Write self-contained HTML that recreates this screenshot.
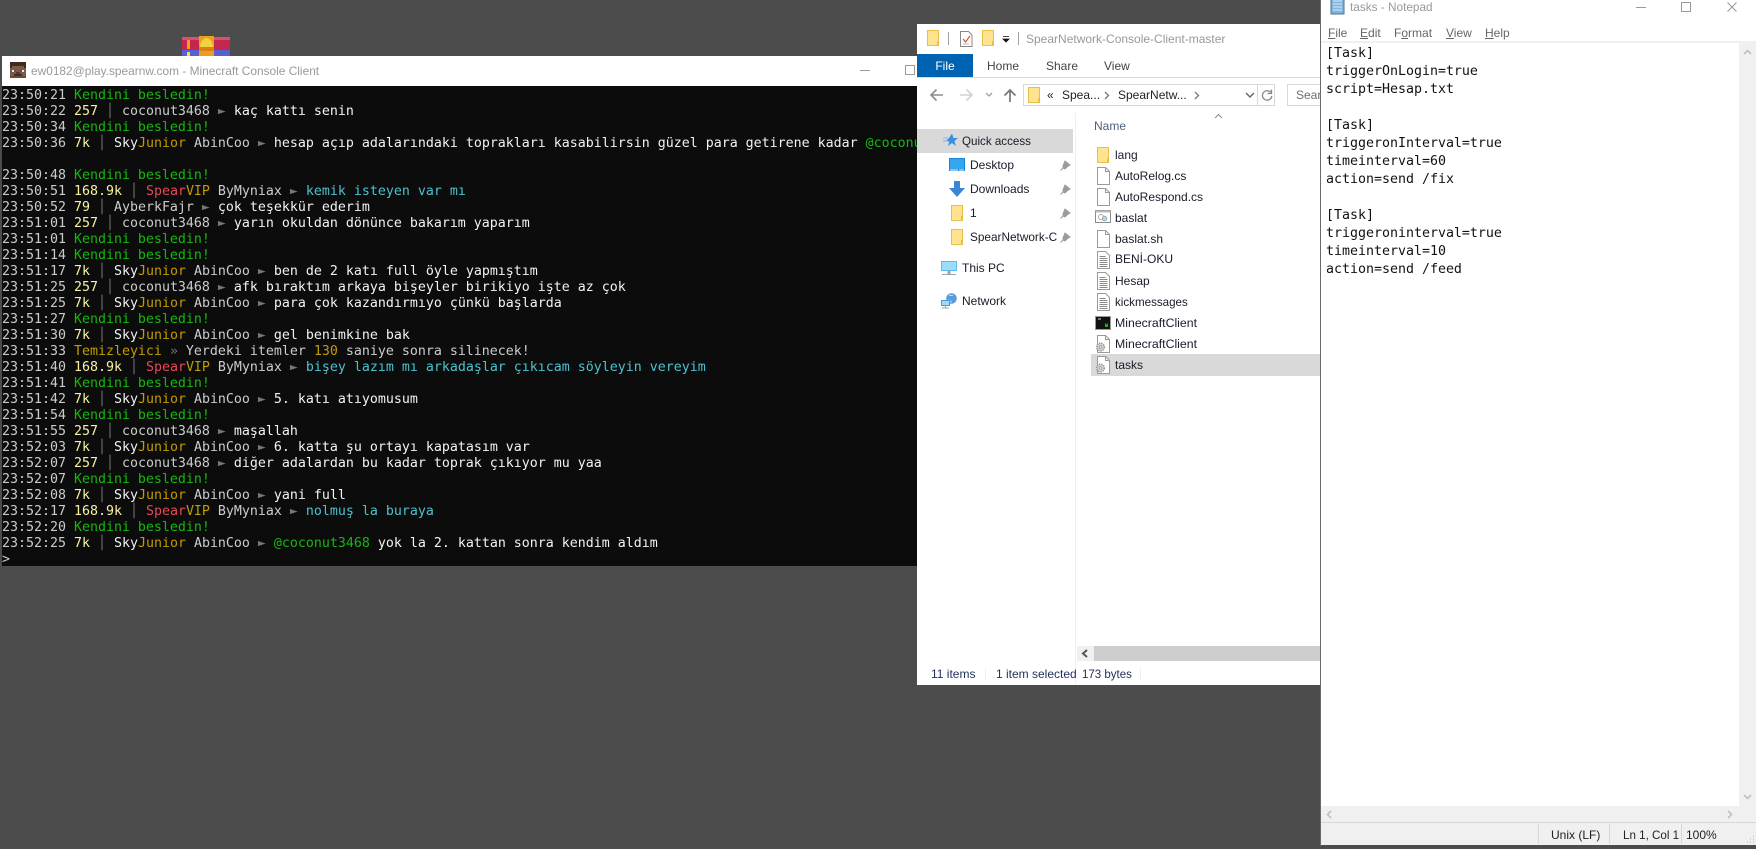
<!DOCTYPE html>
<html><head><meta charset="utf-8"><title>Desktop</title>
<style>
html,body{margin:0;padding:0;width:1756px;height:849px;overflow:hidden;background:#4c4c4c}
body{position:relative;font-family:"Liberation Sans",sans-serif;font-size:12px;color:#1a1a1a}
.a{position:absolute;white-space:nowrap}
svg{position:absolute;display:block;overflow:visible}
#con{left:2px;top:86px;width:915px;height:480px;background:#0c0c0c;overflow:hidden}
#con pre{position:absolute;left:0;top:2px;margin:0;font-family:"DejaVu Sans Mono","Liberation Mono",monospace;font-size:13.29px;line-height:16px;color:#ccc}
.g{color:#16b80f}.y{color:#f9f1a5}.b{color:#767676}.w{color:#f2f2f2}.o{color:#c19c00}.r{color:#e74856}.c{color:#4cc2cf}
.m{font-family:"DejaVu Sans Mono","Liberation Mono",monospace;font-size:13.29px;line-height:18px;color:#111;white-space:pre}
.f{left:1115px;height:16px;line-height:16px;color:#1a1a2a}
.ni{height:16px;line-height:16px;color:#1a1a2a}
.mn{top:26px;color:#666;line-height:14px}
.mn u{text-underline-offset:1px}
</style></head><body>

<!-- WinRAR desktop icon -->
<svg style="left:182px;top:35px" width="48" height="22" viewBox="0 0 48 22">
<rect x="0" y="2" width="48" height="14" rx="2" fill="#c3264f"/><rect x="0" y="2" width="48" height="3" fill="#d9506f"/>
<rect x="0" y="15" width="48" height="7" fill="#5a5fd0"/>
<rect x="5" y="5" width="3" height="9" fill="#f0a020"/><rect x="5" y="17" width="3" height="5" fill="#f4e040"/>
<rect x="17" y="1" width="15" height="21" fill="#e8a020"/><path d="M18 13c0-6 3-10 6.500-10s6.500 4 6.500 10z" fill="#f2d040"/><rect x="17" y="12" width="15" height="4" fill="#d98010"/>
</svg>

<!-- Console window -->
<div class="a" style="left:2px;top:56px;width:915px;height:30px;background:#fff"></div>
<svg style="left:10px;top:62px" width="16" height="16" viewBox="0 0 8 8" shape-rendering="crispEdges">
<rect width="8" height="8" fill="#7d5a45"/><rect width="8" height="2" fill="#3f2a1c"/><rect y="2" width="1" height="1" fill="#3f2a1c"/><rect x="7" y="2" width="1" height="1" fill="#3f2a1c"/>
<rect x="1" y="4" width="1" height="1" fill="#e8e8f0"/><rect x="2" y="4" width="1" height="1" fill="#54508c"/><rect x="5" y="4" width="1" height="1" fill="#54508c"/><rect x="6" y="4" width="1" height="1" fill="#e8e8f0"/>
<rect x="3" y="5" width="2" height="1" fill="#5c3a28"/><rect x="2" y="6" width="4" height="1" fill="#4a2f20"/><rect y="7" width="8" height="1" fill="#6a4a38"/>
</svg>
<div class="a" style="left:31px;top:63px;line-height:16px;font-size:11.9px;color:#999">ew0182@play.spearnw.com - Minecraft Console Client</div>
<div class="a" style="left:860px;top:70px;width:10px;height:1px;background:#999"></div>
<div class="a" style="left:905px;top:65px;width:8px;height:8px;border:1px solid #999"></div>
<div class="a" id="con"><pre>23:50:21 <span class="g">Kendini besledin!</span>
23:50:22 <span class="y">257</span> <span class="b">│</span> coconut3468 <span class="b">►</span> <span class="w">kaç kattı senin</span>
23:50:34 <span class="g">Kendini besledin!</span>
23:50:36 <span class="y">7k</span> <span class="b">│</span> <span class="w">Sky</span><span class="o">Junior</span> AbinCoo <span class="b">►</span> <span class="w">hesap açıp adalarındaki toprakları kasabilirsin güzel para getirene kadar </span><span class="g">@coconut3468</span>

23:50:48 <span class="g">Kendini besledin!</span>
23:50:51 <span class="y">168.9k</span> <span class="b">│</span> <span class="r">Spear</span><span class="o">VIP</span> ByMyniax <span class="b">►</span> <span class="c">kemik isteyen var mı</span>
23:50:52 <span class="y">79</span> <span class="b">│</span> AyberkFajr <span class="b">►</span> <span class="w">çok teşekkür ederim</span>
23:51:01 <span class="y">257</span> <span class="b">│</span> coconut3468 <span class="b">►</span> <span class="w">yarın okuldan dönünce bakarım yaparım</span>
23:51:01 <span class="g">Kendini besledin!</span>
23:51:14 <span class="g">Kendini besledin!</span>
23:51:17 <span class="y">7k</span> <span class="b">│</span> <span class="w">Sky</span><span class="o">Junior</span> AbinCoo <span class="b">►</span> <span class="w">ben de 2 katı full öyle yapmıştım</span>
23:51:25 <span class="y">257</span> <span class="b">│</span> coconut3468 <span class="b">►</span> <span class="w">afk bıraktım arkaya bişeyler birikiyo işte az çok</span>
23:51:25 <span class="y">7k</span> <span class="b">│</span> <span class="w">Sky</span><span class="o">Junior</span> AbinCoo <span class="b">►</span> <span class="w">para çok kazandırmıyo çünkü başlarda</span>
23:51:27 <span class="g">Kendini besledin!</span>
23:51:30 <span class="y">7k</span> <span class="b">│</span> <span class="w">Sky</span><span class="o">Junior</span> AbinCoo <span class="b">►</span> <span class="w">gel benimkine bak</span>
23:51:33 <span class="o">Temizleyici</span> <span class="b">»</span> Yerdeki itemler <span class="o">130</span> saniye sonra silinecek!
23:51:40 <span class="y">168.9k</span> <span class="b">│</span> <span class="r">Spear</span><span class="o">VIP</span> ByMyniax <span class="b">►</span> <span class="c">bişey lazım mı arkadaşlar çıkıcam söyleyin vereyim</span>
23:51:41 <span class="g">Kendini besledin!</span>
23:51:42 <span class="y">7k</span> <span class="b">│</span> <span class="w">Sky</span><span class="o">Junior</span> AbinCoo <span class="b">►</span> <span class="w">5. katı atıyomusum</span>
23:51:54 <span class="g">Kendini besledin!</span>
23:51:55 <span class="y">257</span> <span class="b">│</span> coconut3468 <span class="b">►</span> <span class="w">maşallah</span>
23:52:03 <span class="y">7k</span> <span class="b">│</span> <span class="w">Sky</span><span class="o">Junior</span> AbinCoo <span class="b">►</span> <span class="w">6. katta şu ortayı kapatasım var</span>
23:52:07 <span class="y">257</span> <span class="b">│</span> coconut3468 <span class="b">►</span> <span class="w">diğer adalardan bu kadar toprak çıkıyor mu yaa</span>
23:52:07 <span class="g">Kendini besledin!</span>
23:52:08 <span class="y">7k</span> <span class="b">│</span> <span class="w">Sky</span><span class="o">Junior</span> AbinCoo <span class="b">►</span> <span class="w">yani full</span>
23:52:17 <span class="y">168.9k</span> <span class="b">│</span> <span class="r">Spear</span><span class="o">VIP</span> ByMyniax <span class="b">►</span> <span class="c">nolmuş la buraya</span>
23:52:20 <span class="g">Kendini besledin!</span>
23:52:25 <span class="y">7k</span> <span class="b">│</span> <span class="w">Sky</span><span class="o">Junior</span> AbinCoo <span class="b">►</span> <span class="g">@coconut3468</span> <span class="w">yok la 2. kattan sonra kendim aldım</span>
&gt;</pre></div>

<!-- Explorer window -->
<div class="a" style="left:917px;top:24px;width:404px;height:661px;background:#fff;overflow:hidden">
  <div class="a" style="left:0;top:30px;width:56px;height:23px;background:#0063b1"></div>
  <div class="a" style="left:0;top:53px;width:404px;height:1px;background:#dadada"></div>
</div>
<svg width="0" height="0" style="position:absolute"><defs>
<g id="fo"><path d="M.5.500h11v15H.5z" fill="#ffe38e" stroke="#e8bf4a"/><path d="M10 11h2v4.500h-2z" fill="#e8bf4a"/></g>
<g id="doc"><path d="M.5.500h8l4 4v13H.5z" fill="#fff" stroke="#9a9a9a"/><path d="M8.500.500v4h4" fill="none" stroke="#9a9a9a"/></g>
<g id="txt"><path d="M.5.500h8l4 4v13H.5z" fill="#fff" stroke="#9a9a9a"/><path d="M2.500 5.500h6M2.500 7.500h8M2.500 9.500h8M2.500 11.500h8M2.500 13.500h8M2.500 15.500h8" stroke="#888" fill="none"/></g>
<g id="cfg"><path d="M2.500.500h8l4 4v13h-12z" fill="#fff" stroke="#9a9a9a"/><path d="M10.500.500v4h4" fill="none" stroke="#9a9a9a"/><circle cx="5.500" cy="12" r="3.800" fill="#ddd" stroke="#999" stroke-width="1.600" stroke-dasharray="1.500 .8"/><circle cx="5.500" cy="12" r="1.400" fill="#fff" stroke="#999"/></g>
<g id="pin"><path d="M5 1l5 4-2 1-3 3-2-1 0-2zM3.500 7.500L.5 10.500" fill="#9b9b9b" stroke="#9b9b9b"/></g>
</defs></svg>
<svg style="left:927px;top:30px" width="13" height="16"><use href="#fo"/></svg>
<div class="a" style="left:948px;top:32px;width:1px;height:13px;background:#a0a0a0"></div>
<svg style="left:960px;top:31px" width="13" height="16"><path d="M.5.500h8l3.500 3.500v11.500H.5z" fill="#fff" stroke="#888"/><path d="M3 8l2.500 3L10 5" fill="none" stroke="#e0552a" stroke-width="1.300"/><path d="M3 13h6" stroke="#bbb"/></svg>
<svg style="left:982px;top:30px" width="13" height="16"><use href="#fo"/></svg>
<svg style="left:1002px;top:36px" width="9" height="8"><path d="M1 .500h6M1 3h6l-3 3z" fill="#111" stroke="#111" stroke-width=".8"/></svg>
<div class="a" style="left:1018px;top:32px;width:1px;height:13px;background:#a0a0a0"></div>
<div class="a" style="left:1026px;top:31px;line-height:16px;font-size:12px;color:#999">SpearNetwork-Console-Client-master</div>
<div class="a" style="left:917px;top:58px;width:56px;text-align:center;line-height:16px;color:#fff">File</div>
<div class="a" style="left:987px;top:58px;line-height:16px;color:#444">Home</div>
<div class="a" style="left:1046px;top:58px;line-height:16px;color:#444">Share</div>
<div class="a" style="left:1104px;top:58px;line-height:16px;color:#444">View</div>

<svg style="left:929px;top:88px" width="15" height="14"><path d="M14 7H2M7.500 1.500L2 7l5.500 5.500" fill="none" stroke="#8e8e8e" stroke-width="1.600"/></svg>
<svg style="left:959px;top:88px" width="15" height="14"><path d="M1 7h12M7.500 1.500L13 7l-5.500 5.500" fill="none" stroke="#d2d2d2" stroke-width="1.600"/></svg>
<svg style="left:985px;top:92px" width="9" height="6"><path d="M1 1l3 3 3-3" fill="none" stroke="#a0a0a0" stroke-width="1.300"/></svg>
<svg style="left:1003px;top:88px" width="14" height="15"><path d="M7 14V2M1.500 7.500L7 2l5.500 5.500" fill="none" stroke="#777" stroke-width="1.700"/></svg>
<div class="a" style="left:1023px;top:84px;width:250px;height:20px;border:1px solid #d9d9d9"></div>
<svg style="left:1028px;top:87px" width="13" height="16"><use href="#fo"/></svg>
<div class="a" style="left:1047px;top:87px;line-height:16px;color:#222">«</div>
<div class="a" style="left:1062px;top:87px;line-height:16px;color:#222">Spea...</div>
<svg style="left:1104px;top:91px" width="6" height="9"><path d="M1 1l3.500 3.500L1 8" fill="none" stroke="#777" stroke-width="1.300"/></svg>
<div class="a" style="left:1118px;top:87px;line-height:16px;color:#222">SpearNetw...</div>
<svg style="left:1194px;top:91px" width="6" height="9"><path d="M1 1l3.500 3.500L1 8" fill="none" stroke="#777" stroke-width="1.300"/></svg>
<svg style="left:1245px;top:92px" width="10" height="7"><path d="M1 1l4 4 4-4" fill="none" stroke="#666" stroke-width="1.400"/></svg>
<div class="a" style="left:1257px;top:85px;width:1px;height:20px;background:#d9d9d9"></div>
<svg style="left:1261px;top:89px" width="12" height="13"><path d="M9.800 3.500A4.700 4.700 0 1 0 10.800 7" fill="none" stroke="#888" stroke-width="1.300"/><path d="M10.500 .500v4h-4" fill="none" stroke="#888" stroke-width="1.300"/></svg>
<div class="a" style="left:1287px;top:84px;width:40px;height:20px;border:1px solid #d9d9d9;border-right:0"></div>
<div class="a" style="left:1296px;top:87px;line-height:16px;color:#6d6d6d;width:25px;overflow:hidden">Search</div>

<div class="a" style="left:1075px;top:113px;width:1px;height:572px;background:#f0f0f0"></div>
<div class="a" style="left:917px;top:129px;width:156px;height:24px;background:#d9d9d9"></div>
<svg style="left:943px;top:133px" width="15" height="15" viewBox="0 0 15 15"><path d="M9 .500l1.500 4.500H15l-3.500 3 1.300 5-3.800-3-4 3 1.300-4.500-3.300-.5L6 5z" fill="#3b8fe0"/><path d="M0 5h5M0 8h3" stroke="#7cb8ee"/></svg>
<div class="a ni" style="left:962px;top:134px;font-size:11.6px">Quick access</div>
<svg style="left:949px;top:158px" width="16" height="14"><rect width="16" height="13" fill="#1586dd"/><rect x="1" y="1" width="14" height="10" fill="#35a6ee"/><path d="M1 12h14" stroke="#fff" stroke-dasharray="8 1"/></svg>
<div class="a ni" style="left:970px;top:157px">Desktop</div>
<svg style="left:949px;top:181px" width="16" height="16"><path d="M5 0h6v7h5l-8 9-8-9h5z" fill="#3a86d6"/></svg>
<div class="a ni" style="left:970px;top:181px">Downloads</div>
<svg style="left:951px;top:205px" width="13" height="16"><use href="#fo"/></svg>
<div class="a ni" style="left:970px;top:205px">1</div>
<svg style="left:951px;top:229px" width="13" height="16"><use href="#fo"/></svg>
<div class="a ni" style="left:970px;top:229px;font-size:11.8px">SpearNetwork-C</div>
<svg style="left:1060px;top:160px" width="11" height="11"><use href="#pin"/></svg>
<svg style="left:1060px;top:184px" width="11" height="11"><use href="#pin"/></svg>
<svg style="left:1060px;top:208px" width="11" height="11"><use href="#pin"/></svg>
<svg style="left:1060px;top:232px" width="11" height="11"><use href="#pin"/></svg>
<svg style="left:941px;top:261px" width="16" height="15"><rect width="16" height="10" fill="#58bdf0"/><rect x="1" y="1" width="14" height="8" fill="#9adcfa"/><path d="M7 10h2v3H7zM1 13.500h14" stroke="#9aa6ae" fill="#9aa6ae"/></svg>
<div class="a ni" style="left:962px;top:260px">This PC</div>
<svg style="left:941px;top:293px" width="16" height="16"><circle cx="10.500" cy="5.500" r="5.300" fill="#5a9ad8"/><path d="M8 2c2 1 3 0 4 .5M7 7c2 0 2 2 4 2" stroke="#bfe0f5" fill="none"/><rect x="0" y="7" width="9" height="6" fill="#3fa0dd"/><rect x="1" y="8" width="7" height="4" fill="#9adcfa"/><path d="M1 15h7M4.500 13v2" stroke="#9aa6ae"/></svg>
<div class="a ni" style="left:962px;top:293px">Network</div>

<div class="a" style="left:1094px;top:118px;line-height:16px;color:#4c607a">Name</div>
<svg style="left:1214px;top:113px" width="9" height="6"><path d="M1 5l3.500-3.500L8 5" fill="none" stroke="#8a8a8a"/></svg>

<div class="a" style="left:1091px;top:354px;width:230px;height:22px;background:#d9d9d9"></div>
<svg style="left:1097px;top:147px" width="13" height="16"><use href="#fo"/></svg>
<div class="a f" style="top:147px">lang</div>
<svg style="left:1097px;top:167px" width="13" height="18"><use href="#doc"/></svg>
<div class="a f" style="top:168px">AutoRelog.cs</div>
<svg style="left:1097px;top:188px" width="13" height="18"><use href="#doc"/></svg>
<div class="a f" style="top:189px">AutoRespond.cs</div>
<svg style="left:1095px;top:210px" width="16" height="14"><rect x=".5" y=".5" width="15" height="12" fill="#fff" stroke="#8a8a8a"/><rect x=".5" y=".5" width="15" height="2" fill="#bbb"/><circle cx="6" cy="7" r="2.500" fill="none" stroke="#aaa"/><circle cx="9.500" cy="8.500" r="2.200" fill="#bfd9ee" stroke="#8ab"/></svg>
<div class="a f" style="top:210px">baslat</div>
<svg style="left:1097px;top:230px" width="13" height="18"><use href="#doc"/></svg>
<div class="a f" style="top:231px">baslat.sh</div>
<svg style="left:1097px;top:251px" width="13" height="18"><use href="#txt"/></svg>
<div class="a f" style="top:251px">BENİ-OKU</div>
<svg style="left:1097px;top:272px" width="13" height="18"><use href="#txt"/></svg>
<div class="a f" style="top:273px">Hesap</div>
<svg style="left:1097px;top:293px" width="13" height="18"><use href="#txt"/></svg>
<div class="a f" style="top:295px;font-size:11.6px">kickmessages</div>
<svg style="left:1095px;top:316px" width="16" height="14"><rect width="16" height="14" fill="#9a9a9a"/><rect x="1" y="1" width="14" height="12" fill="#111"/><path d="M3 3h3" stroke="#ddd"/><path d="M10 7l1.500 1.500L13 7v4h-3z" fill="#14b814"/></svg>
<div class="a f" style="top:315px;font-size:12.3px">MinecraftClient</div>
<svg style="left:1095px;top:335px" width="16" height="18"><use href="#cfg"/></svg>
<div class="a f" style="top:336px;font-size:12.3px">MinecraftClient</div>
<svg style="left:1095px;top:356px" width="16" height="18"><use href="#cfg"/></svg>
<div class="a f" style="top:357px">tasks</div>

<div class="a" style="left:1077px;top:646px;width:17px;height:15px;background:#f0f0f0"></div>
<svg style="left:1081px;top:649px" width="8" height="9"><path d="M6 1L2 4.500 6 8" fill="none" stroke="#555" stroke-width="2"/></svg>
<div class="a" style="left:1094px;top:646px;width:227px;height:15px;background:#cdcdcd"></div>
<div class="a" style="left:931px;top:666px;line-height:16px;color:#1e2f5b">11 items</div>
<div class="a" style="left:985px;top:668px;width:1px;height:12px;background:#f0f0f0"></div>
<div class="a" style="left:996px;top:666px;line-height:16px;color:#1e2f5b">1 item selected</div>
<div class="a" style="left:1082px;top:667px;line-height:16px;font-size:11.5px;color:#1e2f5b">173 bytes</div>
<div class="a" style="left:1140px;top:668px;width:1px;height:12px;background:#f0f0f0"></div>

<!-- Notepad window -->
<div class="a" style="left:1320px;top:0;width:1px;height:846px;background:#6a6a6a"></div>
<div class="a" style="left:1321px;top:0;width:435px;height:845px;background:#fff"></div>
<svg style="left:1330px;top:0" width="15" height="15"><rect x="1" y="-3" width="13" height="17" fill="#7fb6e0" stroke="#55718a"/><path d="M3 1h9M3 4h9M3 7h9M3 10h9" stroke="#d8e8f4"/></svg>
<div class="a" style="left:1350px;top:-1px;line-height:16px;font-size:11.8px;color:#999">tasks - Notepad</div>
<div class="a" style="left:1636px;top:7px;width:10px;height:1px;background:#999"></div>
<div class="a" style="left:1681px;top:2px;width:8px;height:8px;border:1px solid #999"></div>
<svg style="left:1727px;top:2px" width="10" height="10"><path d="M.5.500l9 9M9.500.500l-9 9" stroke="#999" fill="none"/></svg>
<div class="a mn" style="left:1328px"><u>F</u>ile</div>
<div class="a mn" style="left:1360px"><u>E</u>dit</div>
<div class="a mn" style="left:1394px">F<u>o</u>rmat</div>
<div class="a mn" style="left:1446px"><u>V</u>iew</div>
<div class="a mn" style="left:1485px"><u>H</u>elp</div>
<div class="a" style="left:1321px;top:41px;width:435px;height:2px;background:#f0f0f0"></div>
<pre class="a m" style="left:1326px;top:45px;margin:0">[Task]
triggerOnLogin=true
script=Hesap.txt

[Task]
triggeronInterval=true
timeinterval=60
action=send /fix

[Task]
triggeroninterval=true
timeinterval=10
action=send /feed</pre>
<div class="a" style="left:1739px;top:43px;width:17px;height:779px;background:#f0f0f0"></div>
<svg style="left:1743px;top:49px" width="9" height="6"><path d="M1 5l3.500-3.500L8 5" fill="none" stroke="#c0c0c0" stroke-width="1.600"/></svg>
<svg style="left:1743px;top:794px" width="9" height="6"><path d="M1 1l3.500 3.500L8 1" fill="none" stroke="#c0c0c0" stroke-width="1.600"/></svg>
<div class="a" style="left:1321px;top:806px;width:435px;height:16px;background:#f0f0f0"></div>
<svg style="left:1326px;top:810px" width="6" height="9"><path d="M5 1L1.500 4.500 5 8" fill="none" stroke="#c0c0c0" stroke-width="1.600"/></svg>
<svg style="left:1727px;top:810px" width="6" height="9"><path d="M1 1l3.500 3.500L1 8" fill="none" stroke="#c0c0c0" stroke-width="1.600"/></svg>
<div class="a" style="left:1321px;top:822px;width:435px;height:1px;background:#d7d7d7"></div>
<div class="a" style="left:1321px;top:823px;width:435px;height:22px;background:#f0f0f0"></div>
<div class="a" style="left:1538px;top:824px;width:1px;height:20px;background:#d7d7d7"></div>
<div class="a" style="left:1609px;top:824px;width:1px;height:20px;background:#d7d7d7"></div>
<div class="a" style="left:1681px;top:824px;width:1px;height:20px;background:#d7d7d7"></div>
<div class="a" style="left:1551px;top:827px;line-height:16px;color:#222">Unix (LF)</div>
<div class="a" style="left:1623px;top:828px;line-height:16px;color:#222;font-size:11.6px">Ln 1, Col 1</div>
<div class="a" style="left:1686px;top:827px;line-height:16px;color:#222">100%</div>
<svg style="left:1746px;top:835px" width="9" height="9"><path d="M7 1h1M7 4h1M4 4h1M7 7h1M4 7h1M1 7h1" stroke="#b5b5b5"/></svg>
</body></html>
